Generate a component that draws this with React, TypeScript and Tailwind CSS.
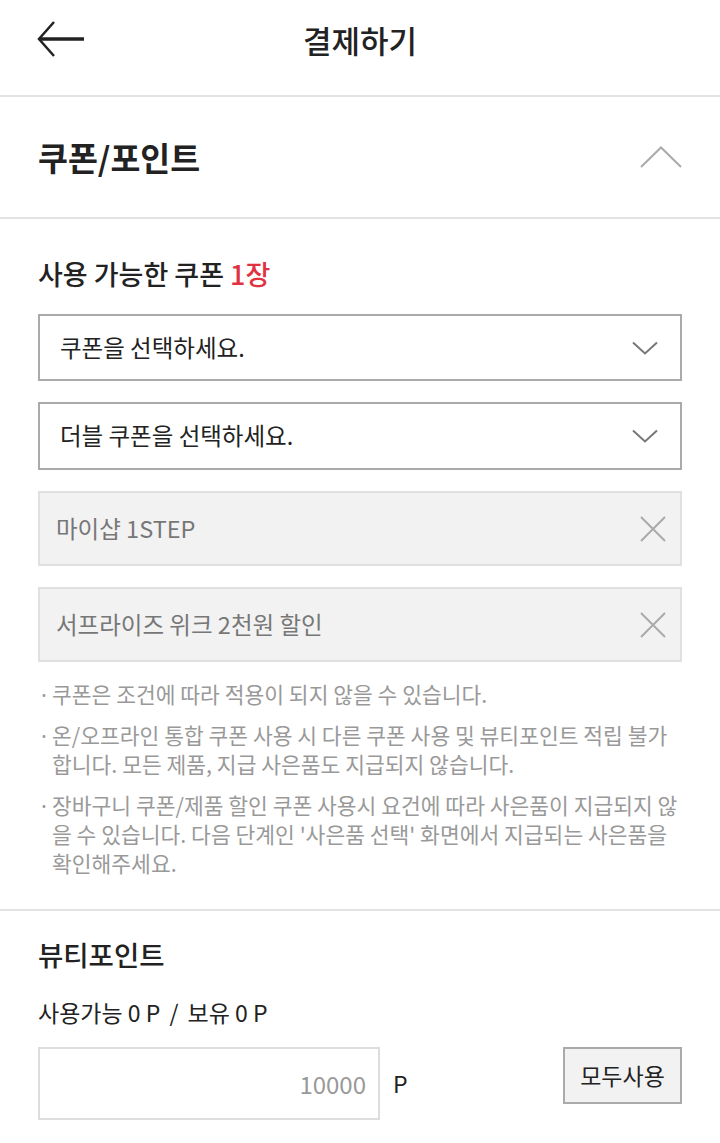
import { useState } from 'react'

const font = { fontFamily: '"Noto Sans CJK KR", "Noto Sans", sans-serif' }

function ChevronDown() {
  return (
    <svg width="26" height="14" viewBox="0 0 26 14" fill="none">
      <path d="M1 1.5 L13 12.5 L25 1.5" stroke="#777" strokeWidth="2" />
    </svg>
  )
}

function CloseIcon() {
  return (
    <svg width="26" height="26" viewBox="0 0 26 26" fill="none">
      <path d="M1 1 L25 25 M25 1 L1 25" stroke="#aaa" strokeWidth="2" />
    </svg>
  )
}

const notes = [
  '쿠폰은 조건에 따라 적용이 되지 않을 수 있습니다.',
  '온/오프라인 통합 쿠폰 사용 시 다른 쿠폰 사용 및 뷰티포인트 적립 불가 합니다. 모든 제품, 지급 사은품도 지급되지 않습니다.',
  "장바구니 쿠폰/제품 할인 쿠폰 사용시 요건에 따라 사은품이 지급되지 않을 수 있습니다. 다음 단계인 '사은품 선택' 화면에서 지급되는 사은품을 확인해주세요.",
]

export default function App() {
  const [open] = useState(true)
  const applied = ['마이샵 1STEP', '서프라이즈 위크 2천원 할인']

  return (
    <div className="min-h-screen w-[720px] bg-white text-[#222]" style={font}>
      {/* Header */}
      <header className="relative flex h-[97px] justify-center border-b-2 border-[#e2e2e2] pt-[22px]">
        <button className="absolute left-[36px] top-[20px]">
          <svg width="50" height="38" viewBox="0 0 50 38" fill="none">
            <path d="M18 2 L3 19 L18 36" stroke="#222" strokeWidth="2.5" />
            <path d="M3 19 H48" stroke="#222" strokeWidth="3.5" />
          </svg>
        </button>
        <h1 className="text-[31px] font-medium leading-[36px]">결제하기</h1>
      </header>

      {/* Coupon / point toggle */}
      <div className="flex h-[122px] items-center justify-between border-b-2 border-[#e2e2e2] px-[38px]">
        <h2 className="text-[32.5px] font-bold leading-none">쿠폰/포인트</h2>
        <svg width="42" height="22" viewBox="0 0 42 22" fill="none" className={open ? '' : 'rotate-180'}>
          <path d="M1 21 L21 1.5 L41 21" stroke="#aaa" strokeWidth="2" />
        </svg>
      </div>

      {/* Coupons */}
      <section className="border-b-2 border-[#e2e2e2] px-[38px] pt-[37px] pb-[32px]">
        <h3 className="text-[27px] font-medium leading-[36px]">
          사용 가능한 쿠폰 <span className="text-[#e0323f]">1장</span>
        </h3>

        <div className="mt-[22px] flex flex-col gap-[21px]">
          <div className="flex h-[67px] items-center justify-between border-2 border-[#aaa] pr-[22px] pl-[20px]">
            <span className="text-[23.5px]">쿠폰을 선택하세요.</span>
            <ChevronDown />
          </div>
          <div className="flex h-[68px] items-center justify-between border-2 border-[#aaa] pr-[22px] pl-[20px]">
            <span className="text-[23.5px]">더블 쿠폰을 선택하세요.</span>
            <ChevronDown />
          </div>
          {applied.map((name) => (
            <div
              key={name}
              className="flex h-[75px] items-center justify-between border-2 border-[#e0e0e0] bg-[#f2f2f2] pr-[14px] pl-[16px]"
            >
              <span className="text-[23.5px] text-[#777]">{name}</span>
              <CloseIcon />
            </div>
          ))}
        </div>

        <ul className="mt-[17px] flex flex-col gap-[12px]">
          {notes.map((n) => (
            <li key={n} className="flex text-[21.5px] leading-[29px] text-[#999]">
              <span className="w-[14px] shrink-0">·</span>
              <span>{n}</span>
            </li>
          ))}
        </ul>
      </section>

      {/* Beauty point */}
      <section className="px-[38px] pt-[25px] pb-[20px]">
        <h3 className="text-[27.5px] font-medium leading-[36px]">뷰티포인트</h3>
        <p className="mt-[24px] text-[23px] leading-[32px]">
          사용가능 0 P <span className="mx-[4px]">/</span> 보유 0 P
        </p>
        <div className="mt-[19px] flex items-start">
          <div className="flex h-[73px] w-[342px] items-center justify-end border-2 border-[#ddd] pr-[12px]">
            <span className="text-[24px] text-[#999]">10000</span>
          </div>
          <span className="ml-[13px] flex h-[73px] items-center text-[23px]">P</span>
          <button className="ml-auto h-[57px] w-[119px] border-2 border-[#aaa] bg-[#f2f2f2] text-[23px]">
            모두사용
          </button>
        </div>
      </section>
    </div>
  )
}
